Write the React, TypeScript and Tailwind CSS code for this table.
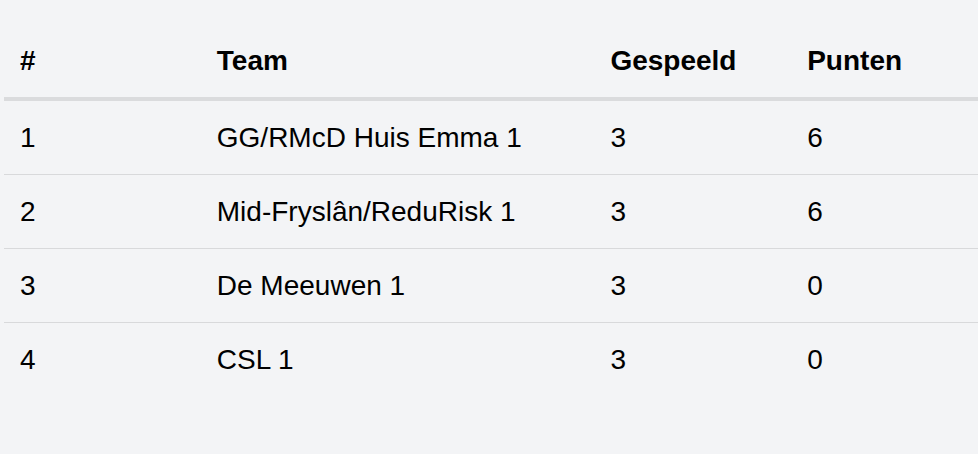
const rows = [
  { pos: 1, team: "GG/RMcD Huis Emma 1", played: 3, points: 6 },
  { pos: 2, team: "Mid-Fryslân/ReduRisk 1", played: 3, points: 6 },
  { pos: 3, team: "De Meeuwen 1", played: 3, points: 0 },
  { pos: 4, team: "CSL 1", played: 3, points: 0 },
];

export default function App() {
  return (
    <div className="min-h-[454px] w-full overflow-hidden bg-[#f3f4f6] pt-6 font-['Liberation_Sans',Arial,sans-serif] text-[28px] text-black">
      <table className="ml-1 w-[984px] table-fixed border-collapse text-left">
        <colgroup>
          <col className="w-[20%]" />
          <col className="w-[40%]" />
          <col className="w-[20%]" />
          <col className="w-[20%]" />
        </colgroup>
        <thead>
          <tr className="border-b-4 border-[#dadbdd]">
            <th className="px-4 pt-[21px] pb-5 font-bold leading-[32px]">#</th>
            <th className="px-4 pt-[21px] pb-5 font-bold leading-[32px]">Team</th>
            <th className="px-4 pt-[21px] pb-5 font-bold leading-[32px]">Gespeeld</th>
            <th className="px-4 pt-[21px] pb-5 font-bold leading-[32px]">Punten</th>
          </tr>
        </thead>
        <tbody>
          {rows.map((r, i) => (
            <tr
              key={r.pos}
              className={i < rows.length - 1 ? "border-b border-[#d8d9db]" : ""}
            >
              <td className="px-4 py-5 leading-[33px]">{r.pos}</td>
              <td className="px-4 py-5 leading-[33px]">{r.team}</td>
              <td className="px-4 py-5 leading-[33px]">{r.played}</td>
              <td className="px-4 py-5 leading-[33px]">{r.points}</td>
            </tr>
          ))}
        </tbody>
      </table>
    </div>
  );
}
